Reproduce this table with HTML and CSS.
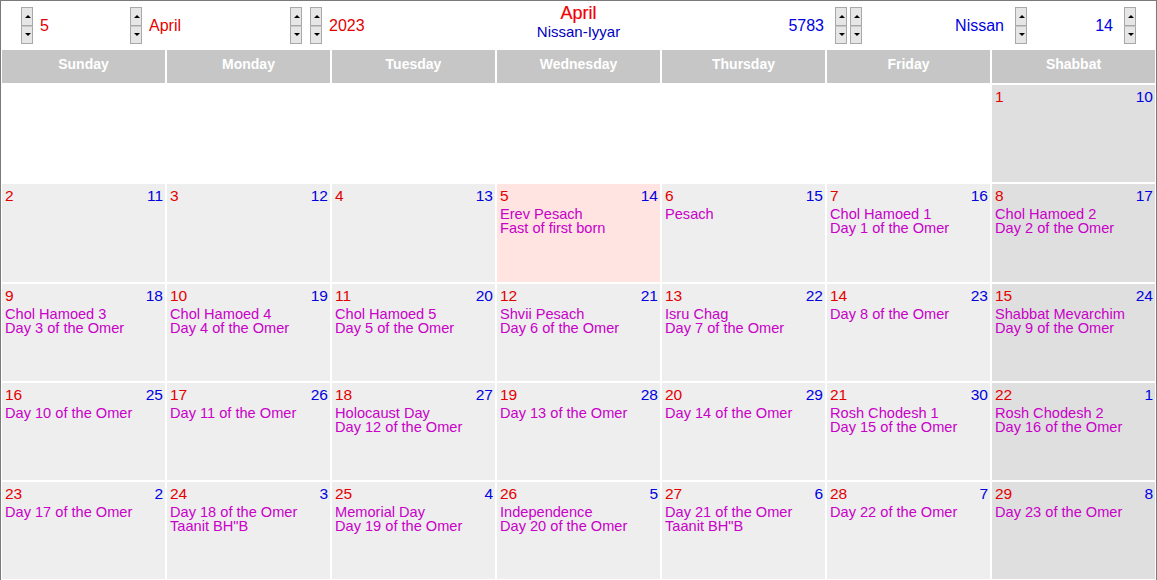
FILE: index.html
```html
<!DOCTYPE html>
<html>
<head>
    <title>Calendar</title>
    <link rel="stylesheet" href="styles.css">
</head>
<body>
    <div class="frame">
        <div class="topbar">
            <div class="left">
                <div class="field f-day">
                    <span class="spin"><i class="up"></i><i class="down"></i></span>
                    <span class="val red">5</span>
                </div>
                <div class="field f-month">
                    <span class="spin"><i class="up"></i><i class="down"></i></span>
                    <span class="val red">April</span>
                </div>
                <div class="field f-year">
                    <span class="spin"><i class="up"></i><i class="down"></i></span>
                    <span class="spin"><i class="up"></i><i class="down"></i></span>
                    <span class="val red">2023</span>
                </div>
            </div>
            <div class="title">
                <div class="t-month">April</div>
                <div class="t-heb">Nissan-Iyyar</div>
            </div>
            <div class="right">
                <div class="field">
                    <span class="val blue">5783</span>
                    <span class="spin"><i class="up"></i><i class="down"></i></span>
                    <span class="spin"><i class="up"></i><i class="down"></i></span>
                </div>
                <div class="field">
                    <span class="val blue wide-m">Nissan</span>
                    <span class="spin"><i class="up"></i><i class="down"></i></span>
                </div>
                <div class="field">
                    <span class="val blue wide-d">14</span>
                    <span class="spin"><i class="up"></i><i class="down"></i></span>
                </div>
            </div>
        </div>

        <div class="grid">
            <div class="dow">Sunday</div>
            <div class="dow">Monday</div>
            <div class="dow">Tuesday</div>
            <div class="dow">Wednesday</div>
            <div class="dow">Thursday</div>
            <div class="dow">Friday</div>
            <div class="dow">Shabbat</div>

            <!-- week 1 -->
            <div class="cell empty"></div>
            <div class="cell empty"></div>
            <div class="cell empty"></div>
            <div class="cell empty"></div>
            <div class="cell empty"></div>
            <div class="cell empty"></div>
            <div class="cell sat"><div class="nums"><span class="g">1</span><span class="h">10</span></div></div>

            <!-- week 2 -->
            <div class="cell"><div class="nums"><span class="g">2</span><span class="h">11</span></div></div>
            <div class="cell"><div class="nums"><span class="g">3</span><span class="h">12</span></div></div>
            <div class="cell"><div class="nums"><span class="g">4</span><span class="h">13</span></div></div>
            <div class="cell today"><div class="nums"><span class="g">5</span><span class="h">14</span></div>
                <div class="ev">Erev Pesach</div><div class="ev">Fast of first born</div></div>
            <div class="cell"><div class="nums"><span class="g">6</span><span class="h">15</span></div>
                <div class="ev">Pesach</div></div>
            <div class="cell"><div class="nums"><span class="g">7</span><span class="h">16</span></div>
                <div class="ev">Chol Hamoed 1</div><div class="ev">Day 1 of the Omer</div></div>
            <div class="cell sat"><div class="nums"><span class="g">8</span><span class="h">17</span></div>
                <div class="ev">Chol Hamoed 2</div><div class="ev">Day 2 of the Omer</div></div>

            <!-- week 3 -->
            <div class="cell"><div class="nums"><span class="g">9</span><span class="h">18</span></div>
                <div class="ev">Chol Hamoed 3</div><div class="ev">Day 3 of the Omer</div></div>
            <div class="cell"><div class="nums"><span class="g">10</span><span class="h">19</span></div>
                <div class="ev">Chol Hamoed 4</div><div class="ev">Day 4 of the Omer</div></div>
            <div class="cell"><div class="nums"><span class="g">11</span><span class="h">20</span></div>
                <div class="ev">Chol Hamoed 5</div><div class="ev">Day 5 of the Omer</div></div>
            <div class="cell"><div class="nums"><span class="g">12</span><span class="h">21</span></div>
                <div class="ev">Shvii Pesach</div><div class="ev">Day 6 of the Omer</div></div>
            <div class="cell"><div class="nums"><span class="g">13</span><span class="h">22</span></div>
                <div class="ev">Isru Chag</div><div class="ev">Day 7 of the Omer</div></div>
            <div class="cell"><div class="nums"><span class="g">14</span><span class="h">23</span></div>
                <div class="ev">Day 8 of the Omer</div></div>
            <div class="cell sat"><div class="nums"><span class="g">15</span><span class="h">24</span></div>
                <div class="ev">Shabbat Mevarchim</div><div class="ev">Day 9 of the Omer</div></div>

            <!-- week 4 -->
            <div class="cell"><div class="nums"><span class="g">16</span><span class="h">25</span></div>
                <div class="ev">Day 10 of the Omer</div></div>
            <div class="cell"><div class="nums"><span class="g">17</span><span class="h">26</span></div>
                <div class="ev">Day 11 of the Omer</div></div>
            <div class="cell"><div class="nums"><span class="g">18</span><span class="h">27</span></div>
                <div class="ev">Holocaust Day</div><div class="ev">Day 12 of the Omer</div></div>
            <div class="cell"><div class="nums"><span class="g">19</span><span class="h">28</span></div>
                <div class="ev">Day 13 of the Omer</div></div>
            <div class="cell"><div class="nums"><span class="g">20</span><span class="h">29</span></div>
                <div class="ev">Day 14 of the Omer</div></div>
            <div class="cell"><div class="nums"><span class="g">21</span><span class="h">30</span></div>
                <div class="ev">Rosh Chodesh 1</div><div class="ev">Day 15 of the Omer</div></div>
            <div class="cell sat"><div class="nums"><span class="g">22</span><span class="h">1</span></div>
                <div class="ev">Rosh Chodesh 2</div><div class="ev">Day 16 of the Omer</div></div>

            <!-- week 5 -->
            <div class="cell"><div class="nums"><span class="g">23</span><span class="h">2</span></div>
                <div class="ev">Day 17 of the Omer</div></div>
            <div class="cell"><div class="nums"><span class="g">24</span><span class="h">3</span></div>
                <div class="ev">Day 18 of the Omer</div><div class="ev">Taanit BH"B</div></div>
            <div class="cell"><div class="nums"><span class="g">25</span><span class="h">4</span></div>
                <div class="ev">Memorial Day</div><div class="ev">Day 19 of the Omer</div></div>
            <div class="cell"><div class="nums"><span class="g">26</span><span class="h">5</span></div>
                <div class="ev">Independence</div><div class="ev">Day 20 of the Omer</div></div>
            <div class="cell"><div class="nums"><span class="g">27</span><span class="h">6</span></div>
                <div class="ev">Day 21 of the Omer</div><div class="ev">Taanit BH"B</div></div>
            <div class="cell"><div class="nums"><span class="g">28</span><span class="h">7</span></div>
                <div class="ev">Day 22 of the Omer</div></div>
            <div class="cell sat"><div class="nums"><span class="g">29</span><span class="h">8</span></div>
                <div class="ev">Day 23 of the Omer</div></div>
        </div>
    </div>
</body>
</html>
```

FILE: styles.css
```css
body { margin: 0; font-family: "Liberation Sans", Arial, sans-serif; background: #fff; }
.frame { border: 1px solid #7a7a7a; height: 600px; overflow: hidden; }

/* top bar with spinners */
.topbar { height: 48px; display: flex; align-items: center; position: relative; }
.left { display: flex; align-items: center; padding-left: 20px; }
.right { display: flex; align-items: center; margin-left: auto; padding-right: 20px; }
.field { display: flex; align-items: center; gap: 7px; }
.f-day { width: 109px; }
.f-month { width: 160px; }
.f-year { gap: 0; }
.f-year .spin + .spin { margin-left: 8px; }
.f-year .val { margin-left: 7px; }
.right .field { gap: 11px; }
.right .field .spin + .spin { margin-left: -8px; }
.wide-m { width: 137px; text-align: right; margin-left: 5px; }
.wide-d { width: 80px; text-align: right; margin-left: 6px; }
.val { font-size: 16px; line-height: 18px; padding-top: 2px; }
.red { color: #e40000; }
.blue { color: #0000e0; }

.spin { display: flex; flex-direction: column; width: 12px; }
.spin i { display: block; height: 17px; border: 1px solid #a8a8a8; background: #e6e6e6; position: relative; }
.spin i + i { border-top-color: #c8c8c8; height: 16px; }
.spin i::after { content: ""; position: absolute; left: 3px; top: 7px; border-left: 3px solid transparent; border-right: 3px solid transparent; }
.spin .up::after { border-bottom: 3px solid #000; }
.spin .down::after { border-top: 3px solid #000; top: 6px; }

.title { position: absolute; left: 0; right: 0; top: 2px; text-align: center; pointer-events: none; }
.t-month { color: #f00000; font-size: 18px; line-height: 20px; -webkit-text-stroke: 0.2px #f00000; }
.t-heb { color: #0000c0; font-size: 15px; line-height: 18px; }

/* calendar grid */
.grid { display: grid; grid-template-columns: repeat(7, 163px); grid-template-rows: 33px repeat(5, 97.25px); gap: 2px; padding: 1px; }
.dow { background: #c6c6c6; color: #fff; font-weight: bold; font-size: 14px; display: flex; align-items: center; justify-content: center; padding-bottom: 6px; }
.cell { background: #eeeeee; padding: 3px 2px 0 3px; }
.cell.empty { background: #fff; }
.cell.sat { background: #dfdfdf; }
.cell.today { background: #ffe4e1; }
.nums { display: flex; justify-content: space-between; font-size: 15.5px; line-height: 18px; }
.g { color: #e40000; }
.h { color: #0000e0; }
.ev { color: #c800c8; font-size: 14.6px; line-height: 14px; }
.nums + .ev { margin-top: 2px; }
```
